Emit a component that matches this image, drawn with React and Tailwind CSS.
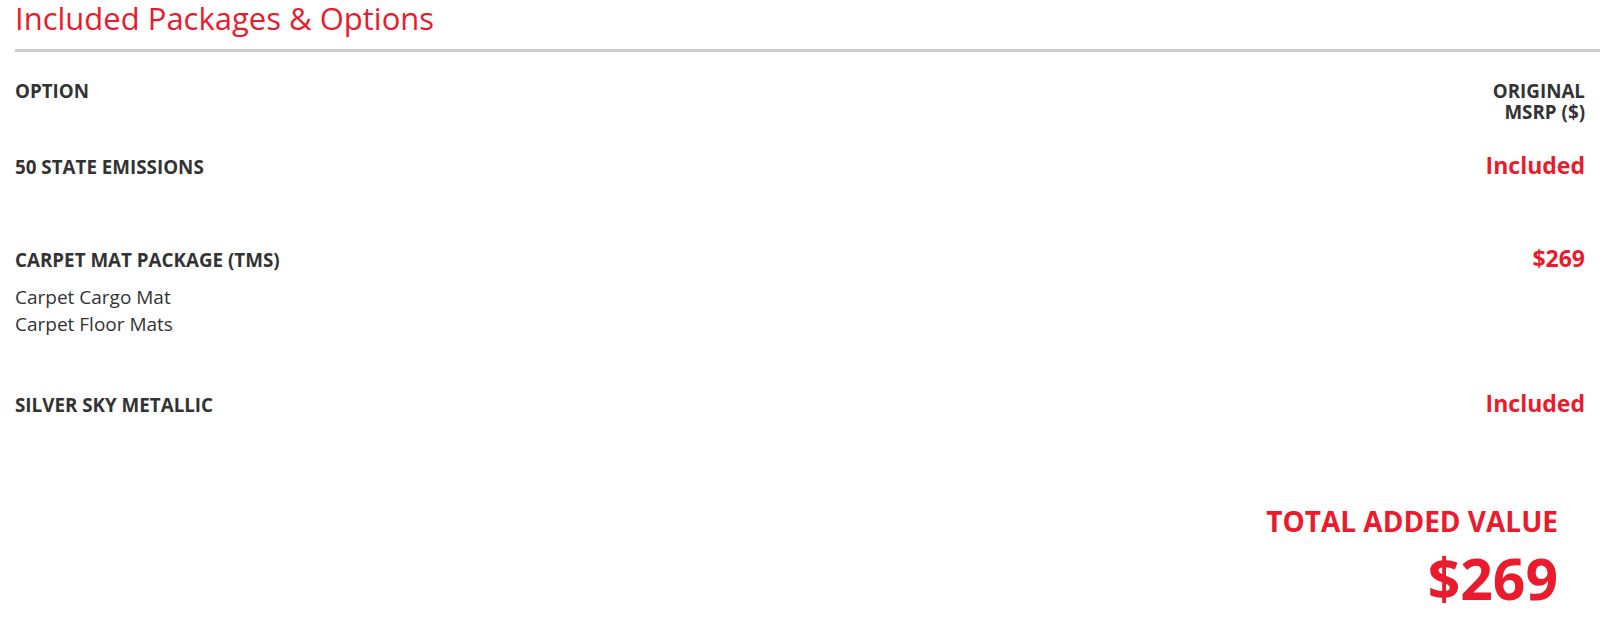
export default function App() {
  const font = { fontFamily: '"Open Sans", "Liberation Sans", sans-serif' };
  return (
    <div className="bg-white w-[1600px] h-[620px] overflow-hidden pl-[15px] text-[#333333]" style={font}>
      <div className="border-b-[3px] border-[#cccccc] pb-[12px]">
        <h2 className="text-[31px] leading-[37px] font-normal text-[#e91b2c]">Included Packages &amp; Options</h2>
      </div>
      <div className="pr-[15px]">
        <div className="flex justify-between items-start mt-[29px] text-[18.8px] leading-[21px] font-bold uppercase">
          <div>OPTION</div>
          <div className="text-right">ORIGINAL<br />MSRP ($)</div>
        </div>
        <div className="flex justify-between items-baseline mt-[28px] mb-[65px]">
          <div className="text-[18.8px] leading-[24px] font-bold">50 STATE EMISSIONS</div>
          <div className="text-[23px] leading-[28px] font-bold text-[#e91b2c]">Included</div>
        </div>
        <div className="flex justify-between items-baseline mb-[51px]">
          <div>
            <div className="text-[18.8px] leading-[24px] font-bold">CARPET MAT PACKAGE (TMS)</div>
            <ul className="mt-[12px] text-[19px] leading-[27px] font-normal">
              <li>Carpet Cargo Mat</li>
              <li>Carpet Floor Mats</li>
            </ul>
          </div>
          <div className="text-[23px] leading-[28px] font-bold text-[#e91b2c]">$269</div>
        </div>
        <div className="flex justify-between items-baseline">
          <div className="text-[18.8px] leading-[24px] font-bold">SILVER SKY METALLIC</div>
          <div className="text-[23px] leading-[28px] font-bold text-[#e91b2c]">Included</div>
        </div>
        <div className="flex flex-col items-end pr-[27px] mt-[87px] text-[#e91b2c] font-bold">
          <div className="text-[28px] leading-[34px]">TOTAL ADDED VALUE</div>
          <div className="text-[57px] leading-[67px] mt-[7px]">$269</div>
        </div>
      </div>
    </div>
  );
}
